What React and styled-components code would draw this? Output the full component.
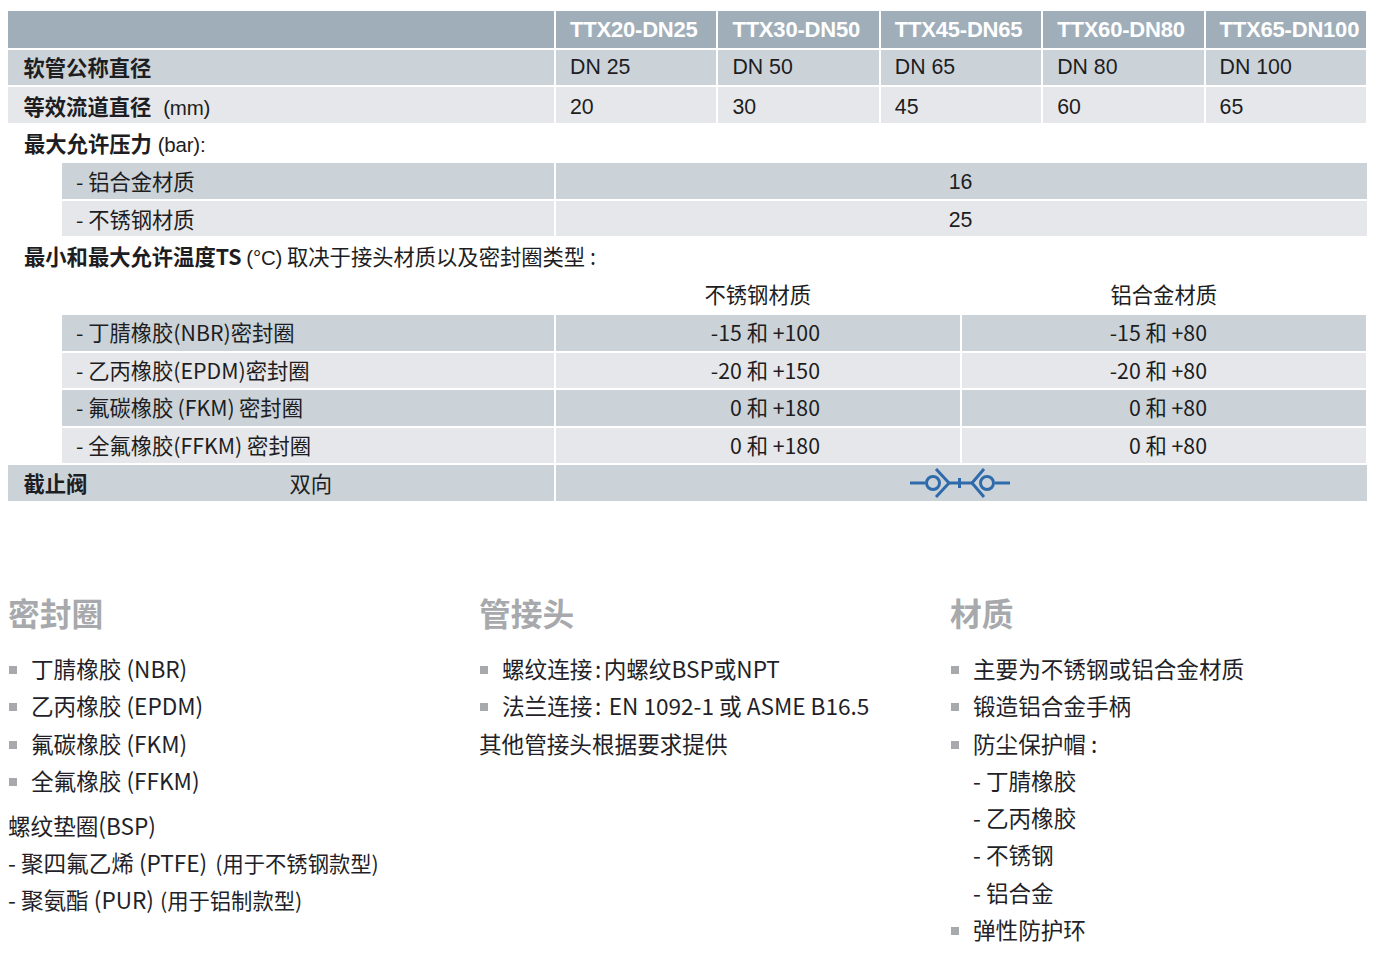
import React from "react"
import styled, { createGlobalStyle } from "styled-components"

const LATIN = `"Liberation Sans", "Noto Sans CJK SC", sans-serif`
const CJK = `"Noto Sans CJK SC", "Noto Sans", sans-serif`

const Global = createGlobalStyle`
  html, body { margin: 0; padding: 0; background: #fff; }
  body { font-family: ${LATIN}; color: #1d1d22; }
`

const Page = styled.div`
  width: 1382px;
  height: 964px;
  overflow: hidden;
  padding: 11px 15px 0 8px;
  box-sizing: border-box;
`

const Table = styled.div`
  display: flex;
  flex-direction: column;
  font-size: 21.3px;
`

const Row = styled.div`
  display: grid;
  grid-template-columns: ${props => props.$cols || "546px repeat(5, 160.4px)"};
  column-gap: 2px;
  height: ${props => props.$h || 36}px;
  margin-bottom: ${props => (props.$mb === undefined ? 2 : props.$mb)}px;
  margin-left: ${props => props.$indent || 0}px;
`

const Cell = styled.div`
  display: flex;
  align-items: center;
  justify-content: ${props => (props.$center ? "center" : props.$pr ? "flex-end" : "flex-start")};
  padding-left: ${props => (props.$center || props.$pr ? 0 : props.$pl === undefined ? 15 : props.$pl)}px;
  padding-right: ${props => props.$pr || 0}px;
  padding-top: ${props => props.$pt || 0}px;
  padding-bottom: ${props => props.$pb || 0}px;
  background: ${props => props.$bg};
  color: #1d1d22;
  font-family: ${props => (props.$cjk ? CJK : LATIN)};
  font-weight: ${props => (props.$bold ? 700 : 400)};
  white-space: pre;
  box-sizing: border-box;
  min-width: 0;
`

const HeadLabel = styled.span`
  font-size: 22px;
  font-weight: 700;
  color: #fff;
  letter-spacing: -0.2px;
`

const B = styled.b`
  font-weight: 700;
`

const Narrow = styled.span`
  font-family: ${LATIN};
  font-size: 20.5px;
  letter-spacing: -0.2px;
`

const Plain = styled.span`
  font-weight: 400;
  margin-left: 202px;
`

const Note = styled.div`
  height: 38px;
  padding: 0 0 3px 16px;
  box-sizing: border-box;
  display: flex;
  align-items: center;
  white-space: pre;
  font-family: ${props => (props.$cjk ? CJK : LATIN)};
`

const ValveSlot = styled.div`
  display: flex;
  margin-right: 3px;
`

const Columns = styled.div`
  display: grid;
  grid-template-columns: 471px 471px 1fr;
  margin-top: 88px;
  font-family: ${CJK};
  font-size: 22.6px;
  color: #231f28;
`

const Heading = styled.h3`
  margin: 0 0 15px;
  height: 46px;
  line-height: 46px;
  font-size: 31.7px;
  font-weight: 700;
  color: #a7a9ac;
`

const Line = styled.div`
  height: 37.3px;
  line-height: 37.3px;
  white-space: pre;
  display: flex;
  align-items: center;
  padding-left: ${props => props.$pl || 0}px;
`

const Bullet = styled.i`
  width: 8px;
  height: 8px;
  background: #a7a9ac;
  margin: 3px 14px 0 1px;
  flex-shrink: 0;
`

const Colon = styled.span`
  margin: 0 2.5px;
`

const Aside = styled.span`
  font-size: 21.3px;
  margin-left: ${props => props.$ml}px;
`

const Gap = styled.div`
  height: 7.5px;
`

const DARK = "#a0aeba"
const MID = "#cbd3d9"
const LIGHT = "#e6e7ea"

const ValveIcon = () => (
  <svg width="100" height="36" viewBox="0 0 100 36" fill="none" stroke="#2f6aab" strokeWidth="3">
    <path d="M0 18H15" />
    <circle cx="23" cy="18" r="6.5" />
    <path d="M26 4L39 18L26 32" />
    <path d="M39 18H62" />
    <path d="M49.5 13V23" />
    <path d="M74 4L62 18L74 32" />
    <circle cx="77" cy="18" r="6.5" />
    <path d="M85 18H100" />
  </svg>
)

const models = ["TTX20-DN25", "TTX30-DN50", "TTX45-DN65", "TTX60-DN80", "TTX65-DN100"]
const sizes = ["DN 25", "DN 50", "DN 65", "DN 80", "DN 100"]
const bores = ["20", "30", "45", "60", "65"]

const temps = [
  ["- 丁腈橡胶(NBR)密封圈", "-15 和 +100", "-15 和 +80", MID],
  ["- 乙丙橡胶(EPDM)密封圈", "-20 和 +150", "-20 和 +80", LIGHT],
  ["- 氟碳橡胶\u2009(FKM)\u2009密封圈", "0 和 +180", "0 和 +80", MID],
  ["- 全氟橡胶(FFKM) 密封圈", "0 和 +180", "0 和 +80", LIGHT],
]

const SUB_COLS = "492px 1fr"
const TEMP_COLS = "492px 403.5px 404.5px"

const Item = ({ children }) => <Line><Bullet /><span>{children}</span></Line>

export default function App() {
  return (
    <Page>
      <Global />
      <Table>
        <Row $h={37}>
          <Cell $bg={DARK} />
          {models.map(m => (
            <Cell key={m} $bg={DARK} $pl={14}><HeadLabel>{m}</HeadLabel></Cell>
          ))}
        </Row>
        <Row $h={35}>
          <Cell $bg={MID} $bold $pb={2} $pl={15.5}>软管公称直径</Cell>
          {sizes.map(s => <Cell key={s} $bg={MID} $pl={14}>{s}</Cell>)}
        </Row>
        <Row $h={36}>
          <Cell $bg={LIGHT} $pl={15.5}><span><B>等效流道直径</B>{"  "}<Narrow>(mm)</Narrow></span></Cell>
          {bores.map(s => <Cell key={s} $bg={LIGHT} $pl={14} $pt={4}>{s}</Cell>)}
        </Row>
        <Note><span><B>最大允许压力</B> <Narrow>(bar):</Narrow></span></Note>
        <Row $cols={SUB_COLS} $indent={54}>
          <Cell $bg={MID} $cjk $pl={14} $pb={2}>- 铝合金材质</Cell>
          <Cell $bg={MID} $center $pr={2} $pt={2}>16</Cell>
        </Row>
        <Row $cols={SUB_COLS} $indent={54} $h={35}>
          <Cell $bg={LIGHT} $cjk $pl={14}>- 不锈钢材质</Cell>
          <Cell $bg={LIGHT} $center $pr={2} $pt={3}>25</Cell>
        </Row>
        <Note $cjk><span><B>最小和最大允许温度TS</B> <Narrow>(°C)</Narrow> 取决于接头材质以及密封圈类型 :</span></Note>
        <Row $cols={TEMP_COLS} $indent={54} $h={39} $mb={0}>
          <Cell />
          <Cell $center $cjk $pb={5}>不锈钢材质</Cell>
          <Cell $center $cjk $pb={5}>铝合金材质</Cell>
        </Row>
        {temps.map(([label, a, b, bg]) => (
          <Row key={label} $cols={TEMP_COLS} $indent={54} $h={35.5}>
            <Cell $bg={bg} $cjk $pl={14} $pb={2}>{label}</Cell>
            <Cell $bg={bg} $cjk $pr={139.5} $pb={2}>{a}</Cell>
            <Cell $bg={bg} $cjk $pr={159} $pb={2}>{b}</Cell>
          </Row>
        ))}
        <Row $cols="546px 1fr" $h={36} $mb={0}>
          <Cell $bg={MID} $cjk $bold $pl={15.5} $pb={2}>截止阀<Plain>双向</Plain></Cell>
          <Cell $bg={MID} $center><ValveSlot><ValveIcon /></ValveSlot></Cell>
        </Row>
      </Table>
      <Columns>
        <div>
          <Heading>密封圈</Heading>
          <Item>丁腈橡胶 (NBR)</Item>
          <Item>乙丙橡胶 (EPDM)</Item>
          <Item>氟碳橡胶 (FKM)</Item>
          <Item>全氟橡胶 (FFKM)</Item>
          <Gap />
          <Line>螺纹垫圈(BSP)</Line>
          <Line><span>- 聚四氟乙烯 (PTFE) <Aside $ml={3}>(用于不锈钢款型)</Aside></span></Line>
          <Line><span>- 聚氨酯 (PUR) <Aside $ml={1}>(用于铝制款型)</Aside></span></Line>
        </div>
        <div>
          <Heading>管接头</Heading>
          <Item>螺纹连接<Colon>:</Colon>内螺纹BSP或NPT</Item>
          <Item>法兰连接<Colon>:</Colon> EN 1092-1 或 ASME B16.5</Item>
          <Line>其他管接头根据要求提供</Line>
        </div>
        <div>
          <Heading>材质</Heading>
          <Item>主要为不锈钢或铝合金材质</Item>
          <Item>锻造铝合金手柄</Item>
          <Item>防尘保护帽 :</Item>
          <Line $pl={23}>- 丁腈橡胶</Line>
          <Line $pl={23}>- 乙丙橡胶</Line>
          <Line $pl={23}>- 不锈钢</Line>
          <Line $pl={23}>- 铝合金</Line>
          <Item>弹性防护环</Item>
        </div>
      </Columns>
    </Page>
  )
}
